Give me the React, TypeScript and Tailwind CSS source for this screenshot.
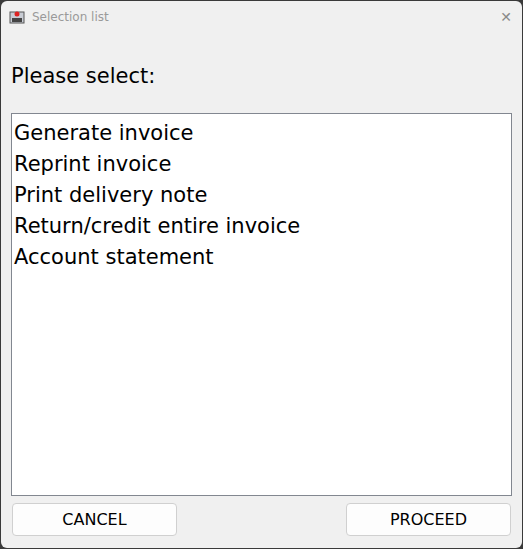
export default function App() {
  const items = [
    "Generate invoice",
    "Reprint invoice",
    "Print delivery note",
    "Return/credit entire invoice",
    "Account statement",
  ];
  return (
    <div className="w-[523px] h-[549px] bg-[#3a3a3a] p-px" style={{ fontFamily: '"DejaVu Sans", sans-serif' }}>
      <div className="w-full h-full bg-[#f0f0f0] rounded-[6px] flex flex-col">
        <div className="h-[31px] flex items-center pl-[8px] pr-[10px] shrink-0">
          <svg width="16" height="16" viewBox="0 0 16 16">
            <rect x="1" y="3" width="14" height="11" fill="#c8ccd4" stroke="#555" />
            <rect x="3" y="9" width="10" height="4" fill="#444" />
            <circle cx="8" cy="5" r="2.5" fill="#d22" />
          </svg>
          <span className="ml-[7px] text-[12px] text-[#9a9a9a]">Selection list</span>
          <span className="ml-auto text-[#8a8a8a] text-[14px] leading-none">✕</span>
        </div>
        <div className="px-[10px] pt-[34px] text-[21px] text-black leading-none">Please select:</div>
        <div className="mx-[10px] mt-[26px] h-[383px] bg-white border border-[#828790] pt-[4px] pl-[2px]">
          {items.map((t) => (
            <div key={t} className="text-[21px] leading-[31px] text-black">{t}</div>
          ))}
        </div>
        <div className="flex justify-between px-[11px] mt-[7px]">
          <button className="w-[165px] h-[33px] bg-[#fdfdfd] border border-[#d0d0d0] rounded-[4px] text-[16px] text-black">CANCEL</button>
          <button className="w-[165px] h-[33px] bg-[#fdfdfd] border border-[#d0d0d0] rounded-[4px] text-[16px] text-black">PROCEED</button>
        </div>
      </div>
    </div>
  );
}
